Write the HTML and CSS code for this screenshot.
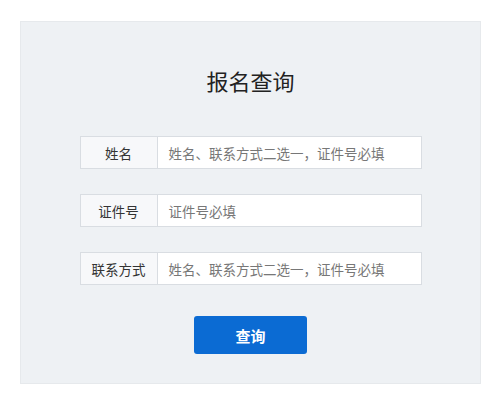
FILE: index.html
```html
<!DOCTYPE html>
<html lang="zh">
<head>
<meta charset="utf-8">
<title>报名查询</title>
<link rel="stylesheet" href="styles.css">
</head>
<body>
<div class="panel">
  <h1 class="title">报名查询</h1>
  <div class="rows">
    <div class="row">
      <div class="label">姓名</div>
      <div class="input">姓名、联系方式二选一，证件号必填</div>
    </div>
    <div class="row">
      <div class="label">证件号</div>
      <div class="input">证件号必填</div>
    </div>
    <div class="row">
      <div class="label">联系方式</div>
      <div class="input">姓名、联系方式二选一，证件号必填</div>
    </div>
  </div>
  <button class="btn">查询</button>
</div>
</body>
</html>
```
FILE: styles.css
```css
html, body {
  margin: 0;
  padding: 0;
  background: #ffffff;
}
body {
  font-family: "Noto Sans CJK SC", "Noto Sans", sans-serif;
  padding: 21px 0 0 20px;
}
.panel {
  box-sizing: border-box;
  width: 461px;
  height: 363px;
  background: #eef1f4;
  border: 1px solid #e6e9ec;
  display: flex;
  flex-direction: column;
  align-items: center;
  padding-top: 43px;
}
.title {
  margin: 0;
  font-size: 22px;
  line-height: 30px;
  font-weight: 400;
  color: #222;
}
.rows {
  margin-top: 41px;
  display: flex;
  flex-direction: column;
  gap: 25px;
}
.row {
  box-sizing: border-box;
  width: 342px;
  height: 33px;
  display: flex;
  border: 1px solid #d9dde2;
  background: #fff;
}
.label {
  width: 76px;
  flex: none;
  background: #f7f8fa;
  border-right: 1px solid #d9dde2;
  font-size: 13.5px;
  color: #333;
  display: flex;
  align-items: center;
  justify-content: center;
}
.input {
  flex: 1;
  padding-left: 11px;
  font-size: 13.5px;
  color: #777;
  display: flex;
  align-items: center;
}
.btn {
  margin-top: 31px;
  width: 113px;
  height: 38px;
  border: none;
  border-radius: 3px;
  background: #0b6bd3;
  color: #fff;
  font-family: "Noto Sans CJK SC", sans-serif;
  font-size: 15px;
  font-weight: 700;
  padding: 0;
}
```
